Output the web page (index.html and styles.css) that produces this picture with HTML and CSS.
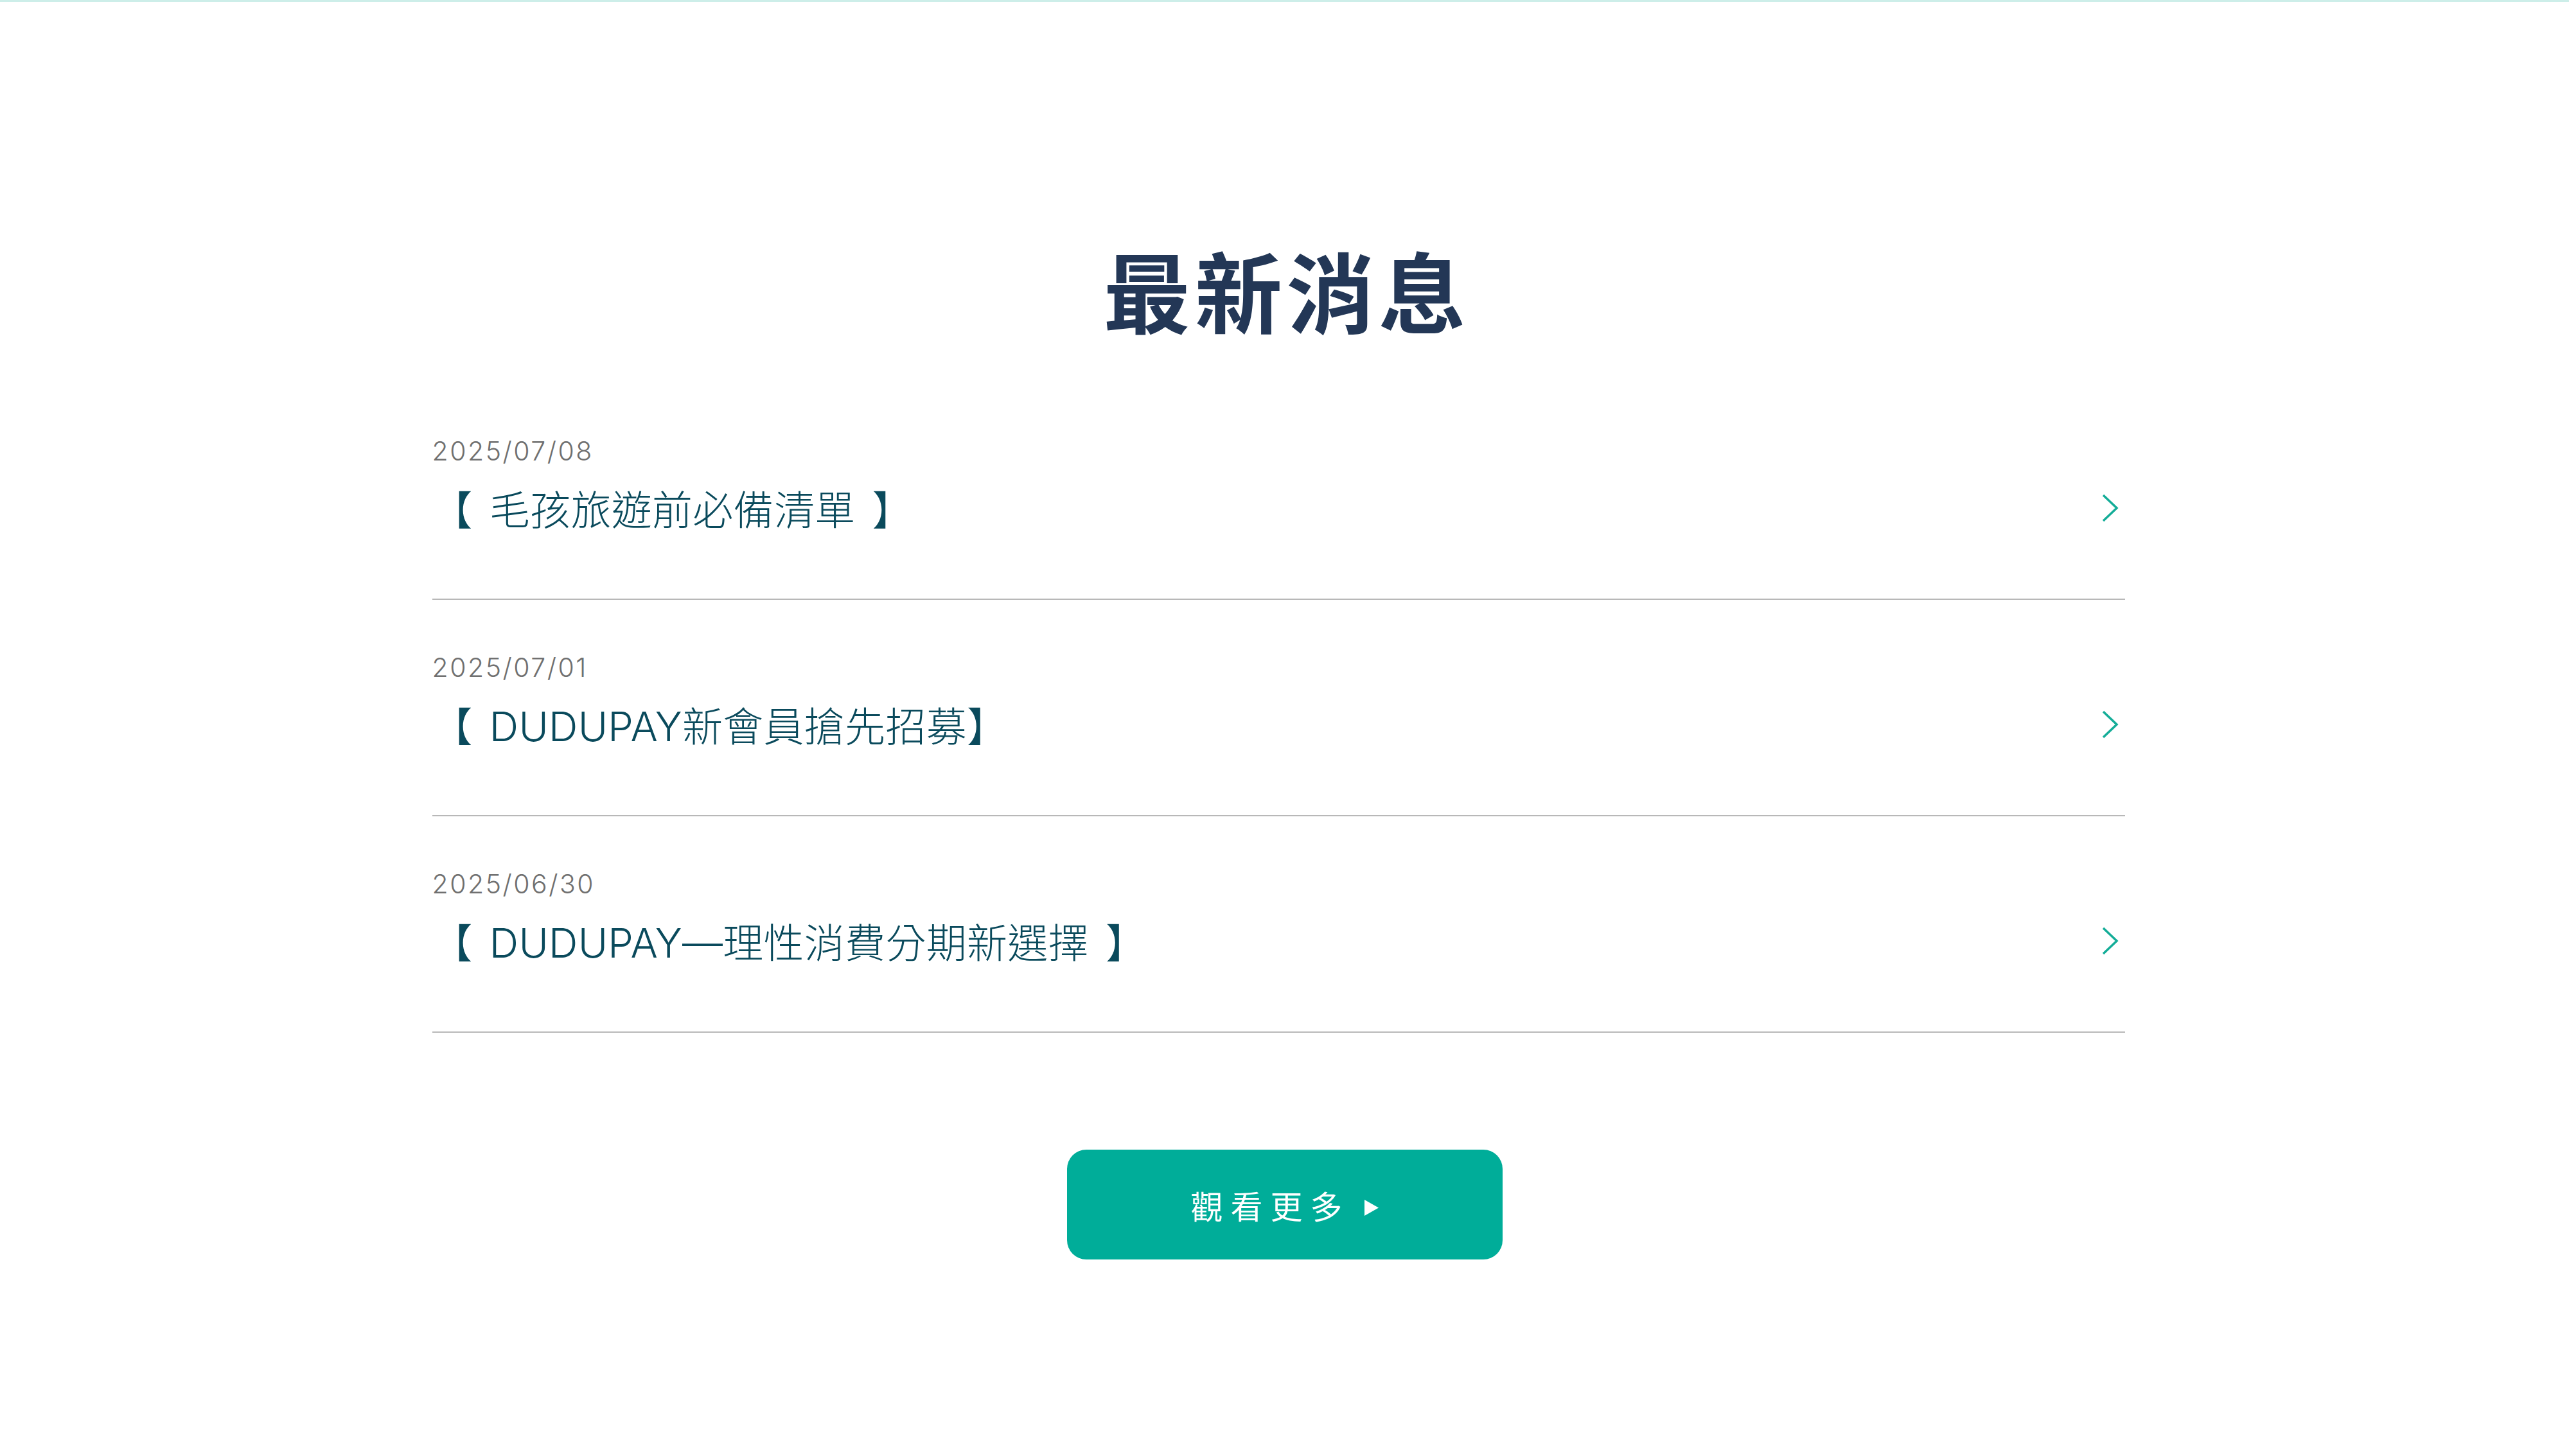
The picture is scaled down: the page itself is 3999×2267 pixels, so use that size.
FILE: index.html
```html
<!DOCTYPE html>
<html lang="zh-Hant">
<head>
  <meta charset="UTF-8">
  <meta name="viewport" content="width=device-width, initial-scale=1">
  <title>最新消息</title>
  <link rel="stylesheet" href="styles.css">
</head>
<body>
  <div class="top-line"></div>
  <section class="news">
    <h1 class="news-heading">最新消息</h1>
    <div class="container">
      <ul class="news-list">
        <li class="news-item">
          <div class="news-date">2025/07/08</div>
          <a class="news-title" href="#">
            <span>【 毛孩旅遊前必備清單 】</span>
            <svg class="chevron" width="26" height="44" viewBox="0 0 26 44"><polyline points="2,2 23,22 2,42"/></svg>
          </a>
        </li>
        <li class="news-item">
          <div class="news-date">2025/07/01</div>
          <a class="news-title" href="#">
            <span>【 DUDUPAY新會員搶先招募】</span>
            <svg class="chevron" width="26" height="44" viewBox="0 0 26 44"><polyline points="2,2 23,22 2,42"/></svg>
          </a>
        </li>
        <li class="news-item">
          <div class="news-date">2025/06/30</div>
          <a class="news-title" href="#">
            <span>【 DUDUPAY—理性消費分期新選擇 】</span>
            <svg class="chevron" width="26" height="44" viewBox="0 0 26 44"><polyline points="2,2 23,22 2,42"/></svg>
          </a>
        </li>
      </ul>
    </div>
    <div class="more">
      <a class="more-btn" href="#">
        <span>觀看更多</span>
        <svg class="more-arrow" width="22" height="25" viewBox="0 0 22 25"><polygon points="0,0 22,12.5 0,25"/></svg>
      </a>
    </div>
  </section>
</body>
</html>
```

FILE: styles.css
```css
/* Basic reset */
body {
  margin: 0;
  padding: 0;
  background-color: #fff;
  font-family: Inter, "Noto Sans CJK TC", sans-serif;
}
.top-line {
  height: 3px;
  background-color: #cdeee9;
}
.news {
  padding-top: 365px;
  padding-bottom: 300px;
}
.news-heading {
  margin: 0;
  padding-left: 0.05em;
  text-align: center;
  font-family: "Noto Sans CJK TC", sans-serif;
  font-size: 136px;
  font-weight: 700;
  line-height: 1.2;
  letter-spacing: 0.05em;
  color: #233756;
}
.container {
  width: 2654px;
  margin: 0 auto;
}
.news-list {
  list-style: none;
  margin: 66px 19px 0 0;
  padding: 0;
}
.news-item {
  padding: 80px 0 90px;
  border-bottom: 2px solid #b8b8b8;
}
.news-date {
  font-size: 41px;
  font-weight: 300;
  line-height: 50px;
  letter-spacing: 2.5px;
  color: #707070;
}
.news-title {
  display: flex;
  justify-content: space-between;
  align-items: center;
  margin-top: 19px;
  font-size: 63px;
  font-weight: 300;
  line-height: 96px;
  letter-spacing: 0.3px;
  word-spacing: 8px;
  color: #0a4a5c;
  text-decoration: none;
}
.chevron {
  margin-right: 10px;
  margin-top: -6px;
  fill: none;
  stroke: #14ad98;
  stroke-width: 3.5;
}
.more {
  display: flex;
  justify-content: center;
  margin-top: 182px;
}
.more-btn {
  display: flex;
  align-items: center;
  justify-content: center;
  gap: 22px;
  width: 678px;
  height: 171px;
  border-radius: 30px;
  background-color: #00ad99;
  color: #fff;
  font-family: "Noto Sans CJK TC", sans-serif;
  font-size: 50px;
  letter-spacing: 12px;
  text-decoration: none;
}
.more-arrow {
  fill: #fff;
  margin-top: 10px;
}
```
